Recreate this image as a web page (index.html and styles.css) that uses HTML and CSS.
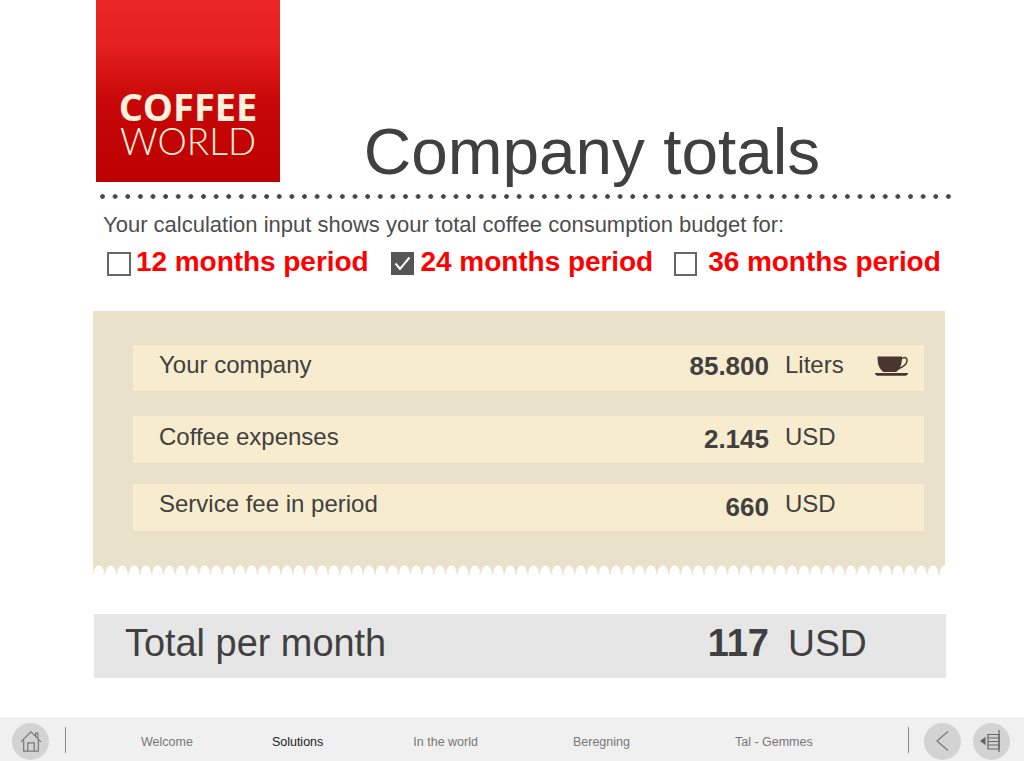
FILE: index.html
```html
<!DOCTYPE html>
<html lang="en">
<head>
    <meta charset="UTF-8">
    <title>Company totals</title>
    <link rel="stylesheet" href="styles.css">
</head>
<body>
    <div class="page">
        <header class="top">
            <div class="logo">
                <span class="logo-coffee">COFFEE</span>
                <span class="logo-world">WORLD</span>
            </div>
            <h1>Company totals</h1>
        </header>
        <div class="dots"></div>
        <p class="intro">Your calculation input shows your total coffee consumption budget for:</p>
        <div class="periods">
            <label class="period period-12"><span class="box"></span>12 months period</label>
            <label class="period period-24">
                <span class="box checked">
                    <svg width="23" height="23" viewBox="0 0 23 23"><path d="M4.5 11.5 L9 17 L18.5 5.5" fill="none" stroke="#fff" stroke-width="2"/></svg>
                </span>24 months period</label>
            <label class="period period-36"><span class="box"></span>36 months period</label>
        </div>

        <section class="panel">
            <div class="row row-1">
                <span class="row-name">Your company</span>
                <span class="row-value">85.800</span>
                <span class="row-unit">Liters</span>
                <svg class="cup" width="33" height="20" viewBox="0 0 33 20">
                    <path d="M2.5 0.5 H27 C27 8 25.5 13 21 16 H8.5 C4 13 2.5 8 2.5 0.5 Z" fill="#4a3530"/>
                    <path d="M26.5 3 C29.5 0.5 32.5 1.5 32 5 C31.5 9 27 11.5 23 13" fill="none" stroke="#4a3530" stroke-width="1.5"/>
                    <path d="M0 17 H33 V18 L31 19.8 H2 L0 18 Z" fill="#4a3530"/>
                </svg>
            </div>
            <div class="row row-2">
                <span class="row-name">Coffee expenses</span>
                <span class="row-value">2.145</span>
                <span class="row-unit">USD</span>
            </div>
            <div class="row row-3">
                <span class="row-name">Service fee in period</span>
                <span class="row-value">660</span>
                <span class="row-unit">USD</span>
            </div>
        </section>

        <section class="total">
            <span class="total-name">Total per month</span>
            <span class="total-value">117</span>
            <span class="total-unit">USD</span>
        </section>
    </div>

    <footer class="nav">
        <a class="round home" href="#">
            <svg width="24" height="24" viewBox="0 0 24 24" fill="none" stroke="#777" stroke-width="1.3">
                <path d="M1 13 L12 2 L23 13"/>
                <path d="M17 6.5 V3.5 H19.5 V9"/>
                <path d="M4 11 V23 H20 V11"/>
                <path d="M8.5 23 V14 H15.5 V23"/>
            </svg>
        </a>
        <span class="sep"></span>
        <ul class="links">
            <li class="link-welcome"><a href="#">Welcome</a></li>
            <li class="link-solutions"><a href="#" class="active">Solutions</a></li>
            <li class="link-world"><a href="#">In the world</a></li>
            <li class="link-calc"><a href="#">Beregning</a></li>
            <li class="link-save"><a href="#">Tal - Gemmes</a></li>
        </ul>
        <span class="sep"></span>
        <a class="round back" href="#">
            <svg width="24" height="24" viewBox="0 0 24 24" fill="none" stroke="#777" stroke-width="1.2"><path d="M17 2.5 L6 12 L17 21.5"/></svg>
        </a>
        <a class="round menu" href="#">
            <svg width="24" height="24" viewBox="0 0 24 24" fill="none" stroke="#666" stroke-width="1.2">
                <path d="M1 12 L5 9 V15 Z" fill="#666"/>
                <path d="M8 5.5 H19 V20 H8 Z"/>
                <path d="M8 9 H19 M8 12.5 H19 M8 16 H19"/>
                <path d="M19 1 V23"/>
            </svg>
        </a>
    </footer>
</body>
</html>
```

FILE: styles.css
```css
* {
    box-sizing: border-box;
}
html, body {
    margin: 0;
    padding: 0;
}
body {
    width: 1024px;
    height: 761px;
    overflow: hidden;
    display: flex;
    flex-direction: column;
    background-color: #fff;
    font-family: "Liberation Sans", Arial, sans-serif;
    color: #404040;
}
.page {
    flex: 1;
    padding-left: 93px;
    width: 946px;
}

/* header */
.top {
    display: flex;
    align-items: flex-end;
    padding-left: 3px;
    height: 182px;
}
.logo {
    width: 184px;
    height: 182px;
    flex-shrink: 0;
    padding-top: 87px;
    display: flex;
    flex-direction: column;
    align-items: center;
    background: linear-gradient(#ea2525 0%, #e42020 25%, #c80808 55%, #bd0000 100%);
    color: #fbf1dc;
    font-family: "Open Sans", sans-serif;
}
.logo-coffee {
    font-size: 38px;
    line-height: 38px;
    font-weight: 700;
    white-space: nowrap;
}
.logo-world {
    font-size: 37px;
    line-height: 32px;
    font-weight: 300;
    font-family: Lato, sans-serif;
    white-space: nowrap;
}
h1 {
    flex: 1;
    margin: 0;
    padding-right: 42px;
    text-align: center;
    font-size: 65.7px;
    font-weight: 400;
    line-height: 64px;
    height: 62px;
}
.dots {
    height: 5px;
    margin: 12px 0 0 7px;
    width: 853px;
    background: radial-gradient(circle at 2.5px 2.5px, #4a4444 2px, transparent 2.6px) repeat-x;
    background-size: 12.63px 5px;
}
.intro {
    margin: 13px 0 0 10px;
    font-size: 22px;
    line-height: 26px;
    color: #4d4d4d;
}

/* period choices */
.periods {
    display: flex;
    margin-top: 8px;
    height: 65px;
}
.period {
    display: flex;
    align-items: flex-start;
    font-size: 28px;
    font-weight: 700;
    line-height: 32px;
    letter-spacing: -0.05px;
    color: #ff0000;
}
.period-12 {
    margin-left: 14px;
}
.period-24 {
    margin-left: 22px;
}
.period-36 {
    margin-left: 21px;
}
.box {
    width: 24px;
    height: 24px;
    margin-top: 6px;
    margin-right: 5px;
    border: 2px solid #666;
    background-color: #fff;
    display: block;
}
.period-36 .box {
    margin-right: 11px;
    width: 23px;
}
.box.checked {
    width: 23px;
    height: 23px;
    border: 0;
    background-color: #555;
    margin-right: 7px;
}
.box.checked svg {
    display: block;
}

/* beige panel */
.panel {
    position: relative;
    width: 852px;
    height: 264px;
    padding: 34px 21px 0 40px;
    background-color: #eae1ca;
}
.panel::after {
    content: "";
    position: absolute;
    left: 0;
    right: 0;
    bottom: 0;
    height: 10px;
    background: radial-gradient(ellipse 5.7px 10px at 50% 100%, #fff 90%, rgba(255, 255, 255, 0) 100%) repeat-x;
    background-size: 11.75px 10px;
}
.row {
    display: flex;
    align-items: center;
    height: 46px;
    background-color: #f8eccf;
    padding-left: 26px;
    font-size: 24px;
    position: relative;
}
.row-2 {
    margin-top: 25px;
    height: 47px;
}
.row-3 {
    margin-top: 21px;
    height: 47px;
}
.row-name {
    width: 470px;
    margin-top: -6px;
}
.row-value {
    width: 140px;
    text-align: right;
    font-size: 26px;
    font-weight: 700;
    margin-top: -1px;
}
.row-unit {
    margin-left: 16px;
    margin-top: -6px;
}
.row-1 .row-value {
    margin-top: -3px;
}
.row-2 .row-name,
.row-2 .row-unit {
    margin-top: -6px;
}
.row-3 .row-name,
.row-3 .row-unit {
    margin-top: -8px;
}
.cup {
    position: absolute;
    left: 742px;
    top: 11px;
}

/* total */
.total {
    display: flex;
    align-items: center;
    width: 852px;
    height: 64px;
    margin: 39px 0 0 1px;
    padding: 0 0 5px 31px;
    background-color: #e6e6e6;
}
.total-name {
    width: 580px;
    font-size: 37.9px;
}
.total-value {
    width: 64px;
    text-align: right;
    font-size: 38px;
    font-weight: 700;
}
.total-unit {
    margin-left: 19px;
    font-size: 37.3px;
}

/* bottom nav */
.nav {
    display: flex;
    align-items: center;
    height: 44px;
    flex-shrink: 0;
    padding: 4px 0 0 12px;
    background-color: #f0f0f0;
}
.round {
    width: 37px;
    height: 37px;
    border-radius: 50%;
    background-color: #d3d3d3;
    display: flex;
    align-items: center;
    justify-content: center;
    flex-shrink: 0;
}
.round.home svg {
    width: 22px;
    height: 22px;
}
.round.menu {
    margin-left: 12px;
}
.sep {
    width: 1px;
    height: 26px;
    margin-top: -2px;
    background-color: #888;
    flex-shrink: 0;
}
.home + .sep {
    margin-left: 16px;
}
.links {
    list-style: none;
    display: flex;
    margin: 0;
    padding: 2px 0 0;
    width: 842px;
    font-size: 12.5px;
}
.links a {
    color: #777;
    text-decoration: none;
}
.links a.active {
    color: #222;
}
.link-welcome {
    margin-left: 75px;
}
.link-solutions {
    margin-left: 79px;
}
.link-world {
    margin-left: 90px;
}
.link-calc {
    margin-left: 95px;
}
.link-save {
    margin-left: 105px;
}
.links + .sep {
    margin-right: 15px;
}
```
